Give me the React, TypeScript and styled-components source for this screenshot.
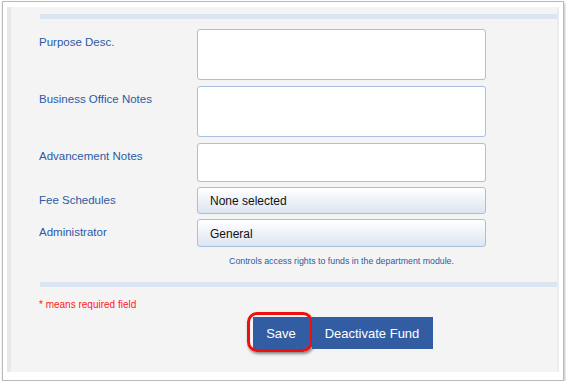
import styled, { createGlobalStyle } from 'styled-components';

const GlobalStyles = createGlobalStyle`
  html, body {
    margin: 0;
    padding: 0;
    background: #ffffff;
    font-family: "Liberation Sans", Arial, sans-serif;
  }
`;

const Frame = styled.div`
  box-sizing: border-box;
  width: 562px;
  height: 380px;
  margin: 1px 0 0 2px;
  padding: 5px 4px 8px 4px;
  background: #ffffff;
  border: 1px solid #b9b9b9;
  box-shadow: 1px 2px 3px rgba(0, 0, 0, 0.25);
`;

const Panel = styled.div`
  box-sizing: border-box;
  height: 100%;
  background: #f4f4f4;
  border-left: 4px solid #e8e8e8;
  border-right: 2px solid #ececec;
  padding: 7px 0 0 29px;
`;

const Divider = styled.div<{ $mt?: number }>`
  height: 5px;
  margin-top: ${(p) => p.$mt ?? 0}px;
  background: #dbe5f1;
`;

const Form = styled.div`
  display: grid;
  grid-template-columns: 158px 289px;
  row-gap: 5px;
  padding-top: 10px;
  margin-left: -1px;
`;

const Label = styled.div`
  padding-top: 6px;
  font-size: 11.5px;
  line-height: 14px;
  color: #2c5aa4;
`;

const TextArea = styled.div<{ $h: number; $mb?: number }>`
  box-sizing: border-box;
  height: ${(p) => p.$h}px;
  margin-bottom: ${(p) => p.$mb ?? 0}px;
  background: #ffffff;
  border: 1px solid #a8bfe0;
  border-radius: 3px;
`;

const Select = styled.div<{ $h: number }>`
  box-sizing: border-box;
  height: ${(p) => p.$h}px;
  display: flex;
  align-items: center;
  padding: 1px 0 0 12px;
  font-size: 12px;
  color: #111111;
  background: linear-gradient(#ffffff, #dde5f0);
  border: 1px solid #a8bfe0;
  border-radius: 3px;
`;

const Hint = styled.div`
  grid-column: 2;
  text-align: center;
  font-size: 8.8px;
  line-height: 11px;
  color: #2c5aa4;
  margin-top: 4px;
`;

const Bottom = styled.div`
  display: grid;
  grid-template-columns: 158px 289px;
  padding-top: 12px;
  margin-left: -1px;
`;

const Required = styled.div`
  grid-column: 1 / span 2;
  font-size: 10px;
  line-height: 12px;
  color: #ff1a1a;
`;

const Buttons = styled.div`
  grid-column: 2;
  display: flex;
  justify-content: center;
  gap: 2px;
  margin: 6px 0 0 2px;
`;

const Button = styled.div<{ $w: number }>`
  position: relative;
  box-sizing: border-box;
  width: ${(p) => p.$w}px;
  height: 32px;
  display: flex;
  align-items: center;
  justify-content: center;
  background: #335da2;
  color: #ffffff;
  font-size: 13px;
`;

const Ring = styled.div`
  position: absolute;
  left: -6px;
  top: -5px;
  right: -3px;
  bottom: -3px;
  border: 3px solid #ee0f0f;
  border-radius: 10px;
  box-shadow: 1px 2px 3px rgba(0, 0, 0, 0.45);
`;

export default function App() {
  return (
    <>
      <GlobalStyles />
      <Frame>
        <Panel>
          <Divider />
          <Form>
            <Label>Purpose Desc.</Label>
            <TextArea $h={51} $mb={1} />
            <Label>Business Office Notes</Label>
            <TextArea $h={51} $mb={1} />
            <Label>Advancement Notes</Label>
            <TextArea $h={39} />
            <Label>Fee Schedules</Label>
            <Select $h={27}>None selected</Select>
            <Label>Administrator</Label>
            <Select $h={28}>General</Select>
            <Hint>Controls access rights to funds in the department module.</Hint>
          </Form>
          <Divider $mt={15} />
          <Bottom>
            <Required>* means required field</Required>
            <Buttons>
              <Button $w={57}>
                Save
                <Ring />
              </Button>
              <Button $w={121}>Deactivate Fund</Button>
            </Buttons>
          </Bottom>
        </Panel>
      </Frame>
    </>
  );
}
